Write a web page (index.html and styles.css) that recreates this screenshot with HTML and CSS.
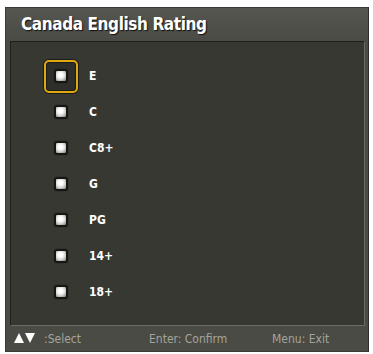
FILE: index.html
```html
<!DOCTYPE html>
<html lang="en">
<head>
    <meta charset="UTF-8">
    <title>Canada English Rating</title>
    <link rel="stylesheet" href="styles.css">
</head>
<body>
    <div class="menu">
        <div class="title">Canada English Rating</div>
        <div class="list">
            <div class="item selected"><span class="box"></span><span class="label">E</span></div>
            <div class="item"><span class="box"></span><span class="label">C</span></div>
            <div class="item"><span class="box"></span><span class="label">C8+</span></div>
            <div class="item"><span class="box"></span><span class="label">G</span></div>
            <div class="item"><span class="box"></span><span class="label">PG</span></div>
            <div class="item"><span class="box"></span><span class="label">14+</span></div>
            <div class="item"><span class="box"></span><span class="label">18+</span></div>
        </div>
        <div class="footer">
            <div class="hint select">
                <svg class="arrows" width="22" height="11" viewBox="0 0 22 11">
                    <polygon points="0,10 5,0 10,10" fill="#fff"/>
                    <polygon points="11,0 21,0 16,10" fill="#fff"/>
                </svg>
                <span>:Select</span>
            </div>
            <div class="hint confirm">Enter: Confirm</div>
            <div class="hint">Menu: Exit</div>
        </div>
    </div>
</body>
</html>
```

FILE: styles.css
```css
body {
    margin: 0;
    background: white;
    font-family: "DejaVu Sans Condensed", "DejaVu Sans", sans-serif;
}
.menu {
    margin: 7px 0 0 5px;
    width: 364px;
    height: 345px;
    box-sizing: border-box;
    background: #4a4b44;
    border: 1px solid #3a3a36;
    border-right-color: #2c2c28;
    display: flex;
    flex-direction: column;
}
.title {
    height: 33px;
    padding-left: 15px;
    line-height: 33px;
    font-size: 17px;
    letter-spacing: -0.4px;
    font-weight: bold;
    color: white;
    text-shadow: 1px 1px 1px #111;
    background: linear-gradient(#55564f, #4a4b44);
}
.list {
    margin: 0 3px 0 4px;
    height: 285px;
    box-sizing: border-box;
    background: #383833;
    border-top: 1px solid #1e1e1b;
    border-left: 1px solid #1e1e1b;
    border-right: 1px solid #6a6b63;
    border-bottom: 1px solid #6a6b63;
    padding-top: 16px;
}
.item {
    display: flex;
    align-items: center;
    height: 36px;
    padding-left: 33px;
}
.box {
    width: 34px;
    height: 33px;
    box-sizing: border-box;
    border: 2px solid transparent;
    border-radius: 5px;
    display: flex;
    align-items: center;
    justify-content: center;
}
.box::before {
    content: "";
    width: 10px;
    height: 10px;
    border: 2px solid #161614;
    border-radius: 3px;
    background: radial-gradient(circle at 45% 40%, #ffffff 25%, #d8d8d4 55%, #8a8a86 90%);
    box-shadow: 0 0 1px #000;
}
.selected .box {
    border-color: #e2a810;
    box-shadow: inset 0 0 0 1px #1c1c1a, 0 0 0 1px #1c1c1a;
    background: #2e2e2a;
}
.label {
    margin-left: 11px;
    font-size: 12px;
    font-weight: bold;
    color: white;
}
.footer {
    flex: 1;
    display: flex;
    align-items: center;
    font-size: 12px;
    color: #a3a49c;
    padding-left: 8px;
}
.select {
    width: 135px;
    display: flex;
    align-items: center;
}
.arrows {
    margin-right: 8px;
}
.confirm {
    width: 123px;
}
```
